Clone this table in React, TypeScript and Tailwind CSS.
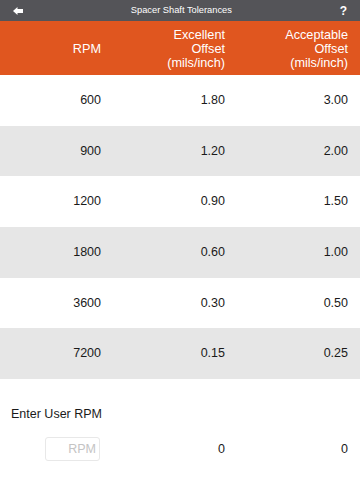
const ROWS = [
  { rpm: "600", excellent: "1.80", acceptable: "3.00" },
  { rpm: "900", excellent: "1.20", acceptable: "2.00" },
  { rpm: "1200", excellent: "0.90", acceptable: "1.50" },
  { rpm: "1800", excellent: "0.60", acceptable: "1.00" },
  { rpm: "3600", excellent: "0.30", acceptable: "0.50" },
  { rpm: "7200", excellent: "0.15", acceptable: "0.25" },
];

function BackArrow() {
  return (
    <svg width="10" height="8" viewBox="0 0 10 8" className="block">
      <path d="M0 4 L4.5 0 L4.5 2 L10 2 L10 6 L4.5 6 L4.5 8 Z" fill="white" />
    </svg>
  );
}

export default function App() {
  return (
    <div className="w-[360px] h-[480px] bg-white overflow-hidden font-['Liberation_Sans',Arial,sans-serif]">
      {/* Top bar */}
      <div className="h-[21px] bg-[#545458] flex items-center justify-between pl-[13px] pr-[12px]">
        <BackArrow />
        <span className="text-[9.3px] text-white">Spacer Shaft Tolerances</span>
        <span className="text-[12px] font-bold text-white pr-[1px]">?</span>
      </div>

      {/* Column header */}
      <div className="h-[54px] bg-[#e0561f] grid grid-cols-3 text-white text-[12.7px] leading-[14px] text-right">
        <div className="flex items-center justify-end pr-[19px] pt-[2px]">RPM</div>
        <div className="flex items-center justify-end pr-[15px] pt-[1px]">
          <span>Excellent<br />Offset<br />(mils/inch)</span>
        </div>
        <div className="flex items-center justify-end pr-[12px] pt-[1px]">
          <span>Acceptable<br />Offset<br />(mils/inch)</span>
        </div>
      </div>

      {/* Rows */}
      {ROWS.map((r, i) => (
        <div
          key={r.rpm}
          className={`h-[50.67px] grid grid-cols-3 items-center text-right text-[12.5px] text-[#1a1a1a] ${i % 2 === 1 ? "bg-[#e6e6e6]" : "bg-white"}`}
        >
          <div className="pr-[19px]">{r.rpm}</div>
          <div className="pr-[15px]">{r.excellent}</div>
          <div className="pr-[12px]">{r.acceptable}</div>
        </div>
      ))}

      {/* User RPM */}
      <div className="pt-[27px] pl-[11px] text-[12.5px] text-[#1a1a1a] leading-[16px]">Enter User RPM</div>
      <div className="mt-[15px] grid grid-cols-3 items-center text-right text-[12.5px] text-[#1a1a1a]">
        <div className="flex justify-end pr-[20px]">
          <input
            placeholder="RPM"
            className="w-[55px] h-[24px] border border-[#e8e8e8] rounded-[3px] text-right pr-[3px] text-[12.5px] placeholder:text-[#c4c4c4] outline-none"
          />
        </div>
        <div className="pr-[15px]">0</div>
        <div className="pr-[12px]">0</div>
      </div>
    </div>
  );
}
